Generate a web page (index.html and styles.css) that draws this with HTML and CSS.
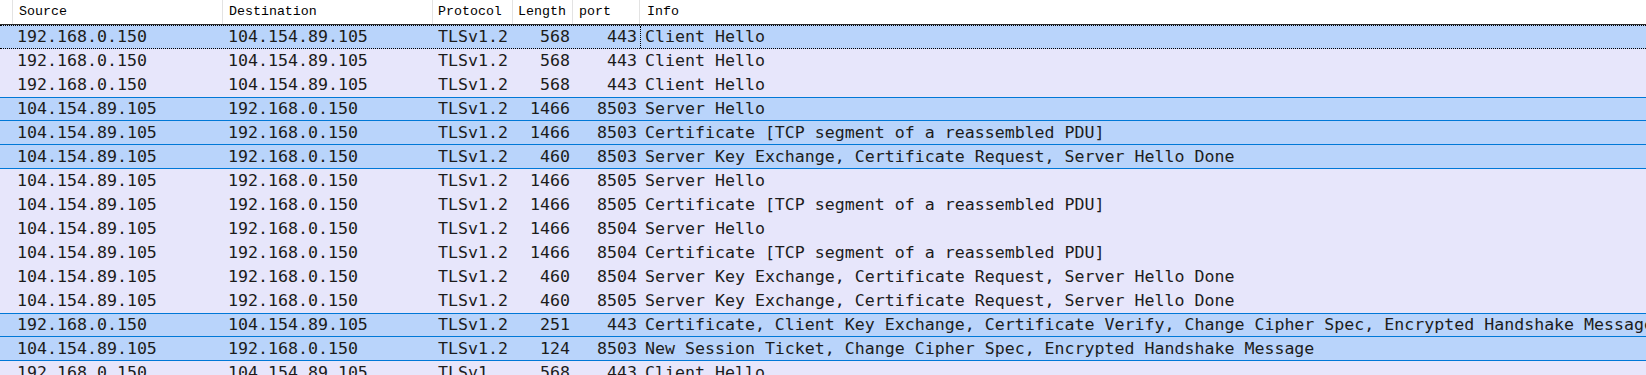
FILE: index.html
```html
<!DOCTYPE html>
<html lang="en">
<head>
  <meta charset="UTF-8">
  <title>Packet List</title>
  <link rel="stylesheet" href="styles.css">
</head>
<body>
  <div class="packet-list">
    <div class="row head">
      <div class="cell"></div>
      <div class="cell">Source</div>
      <div class="cell">Destination</div>
      <div class="cell">Protocol</div>
      <div class="cell">Length</div>
      <div class="cell">port</div>
      <div class="cell">Info</div>
    </div>

    <div class="row sel focus">
      <div class="cell"></div>
      <div class="cell">192.168.0.150</div>
      <div class="cell">104.154.89.105</div>
      <div class="cell">TLSv1.2</div>
      <div class="cell num">568</div>
      <div class="cell num">443</div>
      <div class="cell info">Client Hello</div>
    </div>
    <div class="row">
      <div class="cell"></div>
      <div class="cell">192.168.0.150</div>
      <div class="cell">104.154.89.105</div>
      <div class="cell">TLSv1.2</div>
      <div class="cell num">568</div>
      <div class="cell num">443</div>
      <div class="cell info">Client Hello</div>
    </div>
    <div class="row">
      <div class="cell"></div>
      <div class="cell">192.168.0.150</div>
      <div class="cell">104.154.89.105</div>
      <div class="cell">TLSv1.2</div>
      <div class="cell num">568</div>
      <div class="cell num">443</div>
      <div class="cell info">Client Hello</div>
    </div>
    <div class="row sel">
      <div class="cell"></div>
      <div class="cell">104.154.89.105</div>
      <div class="cell">192.168.0.150</div>
      <div class="cell">TLSv1.2</div>
      <div class="cell num">1466</div>
      <div class="cell num">8503</div>
      <div class="cell info">Server Hello</div>
    </div>
    <div class="row sel">
      <div class="cell"></div>
      <div class="cell">104.154.89.105</div>
      <div class="cell">192.168.0.150</div>
      <div class="cell">TLSv1.2</div>
      <div class="cell num">1466</div>
      <div class="cell num">8503</div>
      <div class="cell info">Certificate [TCP segment of a reassembled PDU]</div>
    </div>
    <div class="row sel">
      <div class="cell"></div>
      <div class="cell">104.154.89.105</div>
      <div class="cell">192.168.0.150</div>
      <div class="cell">TLSv1.2</div>
      <div class="cell num">460</div>
      <div class="cell num">8503</div>
      <div class="cell info">Server Key Exchange, Certificate Request, Server Hello Done</div>
    </div>
    <div class="row">
      <div class="cell"></div>
      <div class="cell">104.154.89.105</div>
      <div class="cell">192.168.0.150</div>
      <div class="cell">TLSv1.2</div>
      <div class="cell num">1466</div>
      <div class="cell num">8505</div>
      <div class="cell info">Server Hello</div>
    </div>
    <div class="row">
      <div class="cell"></div>
      <div class="cell">104.154.89.105</div>
      <div class="cell">192.168.0.150</div>
      <div class="cell">TLSv1.2</div>
      <div class="cell num">1466</div>
      <div class="cell num">8505</div>
      <div class="cell info">Certificate [TCP segment of a reassembled PDU]</div>
    </div>
    <div class="row">
      <div class="cell"></div>
      <div class="cell">104.154.89.105</div>
      <div class="cell">192.168.0.150</div>
      <div class="cell">TLSv1.2</div>
      <div class="cell num">1466</div>
      <div class="cell num">8504</div>
      <div class="cell info">Server Hello</div>
    </div>
    <div class="row">
      <div class="cell"></div>
      <div class="cell">104.154.89.105</div>
      <div class="cell">192.168.0.150</div>
      <div class="cell">TLSv1.2</div>
      <div class="cell num">1466</div>
      <div class="cell num">8504</div>
      <div class="cell info">Certificate [TCP segment of a reassembled PDU]</div>
    </div>
    <div class="row">
      <div class="cell"></div>
      <div class="cell">104.154.89.105</div>
      <div class="cell">192.168.0.150</div>
      <div class="cell">TLSv1.2</div>
      <div class="cell num">460</div>
      <div class="cell num">8504</div>
      <div class="cell info">Server Key Exchange, Certificate Request, Server Hello Done</div>
    </div>
    <div class="row">
      <div class="cell"></div>
      <div class="cell">104.154.89.105</div>
      <div class="cell">192.168.0.150</div>
      <div class="cell">TLSv1.2</div>
      <div class="cell num">460</div>
      <div class="cell num">8505</div>
      <div class="cell info">Server Key Exchange, Certificate Request, Server Hello Done</div>
    </div>
    <div class="row sel">
      <div class="cell"></div>
      <div class="cell">192.168.0.150</div>
      <div class="cell">104.154.89.105</div>
      <div class="cell">TLSv1.2</div>
      <div class="cell num">251</div>
      <div class="cell num">443</div>
      <div class="cell info">Certificate, Client Key Exchange, Certificate Verify, Change Cipher Spec, Encrypted Handshake Message</div>
    </div>
    <div class="row sel">
      <div class="cell"></div>
      <div class="cell">104.154.89.105</div>
      <div class="cell">192.168.0.150</div>
      <div class="cell">TLSv1.2</div>
      <div class="cell num">124</div>
      <div class="cell num">8503</div>
      <div class="cell info">New Session Ticket, Change Cipher Spec, Encrypted Handshake Message</div>
    </div>
    <div class="row">
      <div class="cell"></div>
      <div class="cell">192.168.0.150</div>
      <div class="cell">104.154.89.105</div>
      <div class="cell">TLSv1</div>
      <div class="cell num">568</div>
      <div class="cell num">443</div>
      <div class="cell info">Client Hello</div>
    </div>
  </div>
</body>
</html>
```

FILE: styles.css
```css
* {
  box-sizing: border-box;
}

body {
  margin: 0;
  background: #e7e6fb;
  overflow: hidden;
}

.packet-list {
  width: 1646px;
  height: 375px;
  overflow: hidden;
}

.row {
  display: grid;
  grid-template-columns: 13px 210px 210px 80px 60px 67px 1fr;
  height: 24px;
  background: #e7e6fb;
  color: #1c1c1c;
  font-family: "DejaVu Sans Mono", monospace;
  font-size: 16.6px;
  white-space: nowrap;
}

.cell {
  overflow: hidden;
  padding-left: 4px;
  line-height: 24px;
}

.row .cell:nth-child(3),
.row .cell:nth-child(4) {
  padding-left: 5px;
}

.cell.num {
  text-align: right;
  padding-left: 0;
  padding-right: 3px;
}

.cell.info {
  padding-left: 5px;
}

/* header */
.row.head {
  height: 25px;
  background: white;
  color: #000;
  font-family: "Liberation Mono", monospace;
  font-size: 13.3px;
  border-bottom: 1px solid #2a2a2a;
}

.row.head .cell {
  line-height: 24px;
  padding-left: 6px;
  border-right: 1px solid #e3e3e3;
}

.row.head .cell:first-child {
  padding-left: 0;
}

.row.head .cell:nth-child(4),
.row.head .cell:nth-child(5) {
  padding-left: 5px;
}

.row.head .cell:last-child {
  padding-left: 7px;
  border-right: none;
}

/* highlighted rows */
.row.sel {
  background: #b9d4fb;
  border-top: 1px solid #0078d7;
  border-bottom: 1px solid #0078d7;
}

.row.sel .cell {
  line-height: 22px;
}

.row.sel + .row.sel {
  border-top: none;
}

.row.sel + .row.sel .cell {
  line-height: 23px;
}

.row.sel.focus {
  border-top: 1px dotted #000;
  border-bottom: 1px dotted #000;
}

.row.focus .cell.info {
  border-left: 1px dotted #000;
  padding-left: 4px;
}
```
